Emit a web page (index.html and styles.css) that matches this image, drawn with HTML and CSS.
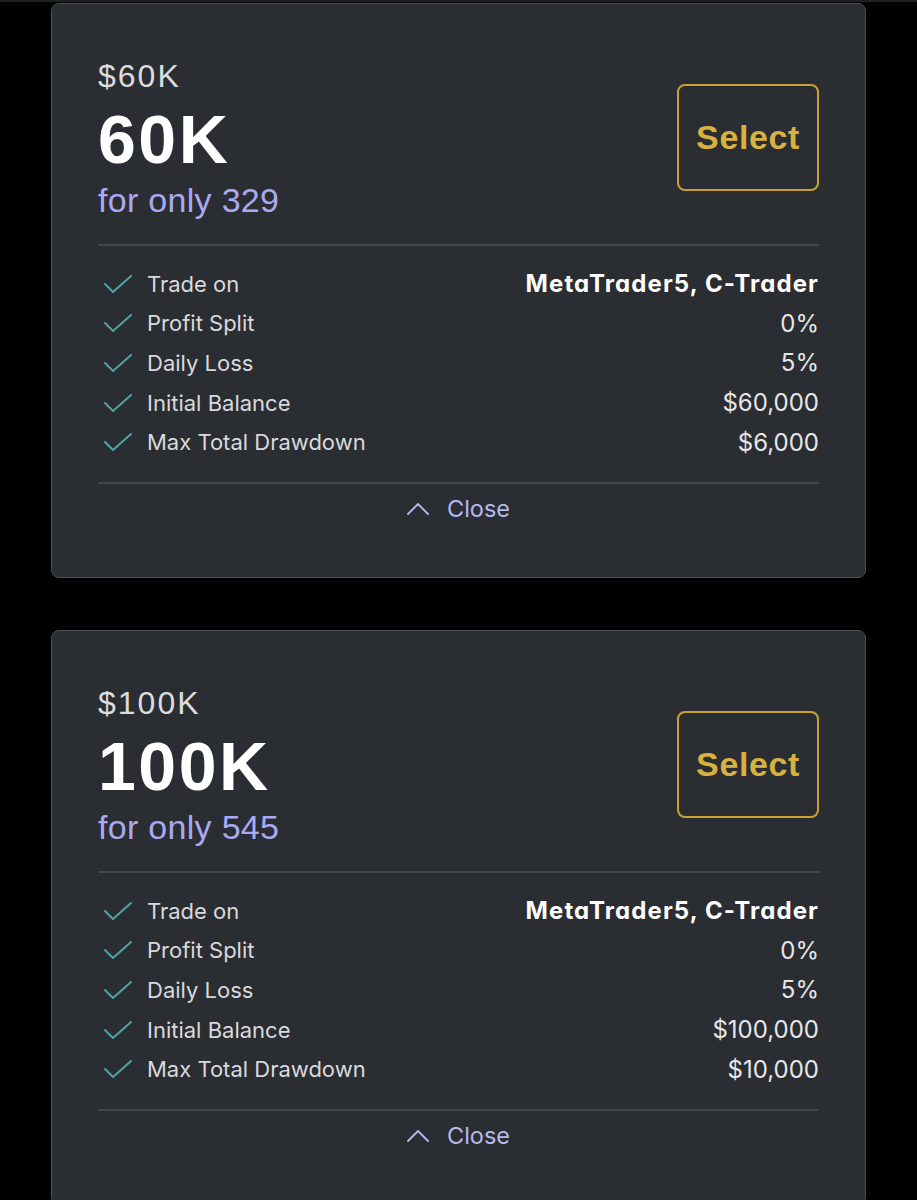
FILE: index.html
```html
<!DOCTYPE html>
<html lang="en">
<head>
<meta charset="utf-8">
<title>Plans</title>
<link rel="stylesheet" href="styles.css">
</head>
<body>
<div class="topbar"></div>
<main class="page">
  <section class="card">
    <div class="card-head">
      <div class="head-text">
        <div class="label">$60K</div>
        <div class="title">60K</div>
        <div class="subtitle">for only 329</div>
      </div>
      <button class="select">Select</button>
    </div>
    <hr class="divider">
    <ul class="features">
      <li class="row"><svg class="check" viewBox="0 0 28 18"><polyline points="1,9 9,17 27,1"/></svg><span class="name">Trade on</span><span class="value strong">MetaTrader5, C-Trader</span></li>
      <li class="row"><svg class="check" viewBox="0 0 28 18"><polyline points="1,9 9,17 27,1"/></svg><span class="name">Profit Split</span><span class="value">0%</span></li>
      <li class="row"><svg class="check" viewBox="0 0 28 18"><polyline points="1,9 9,17 27,1"/></svg><span class="name">Daily Loss</span><span class="value">5%</span></li>
      <li class="row"><svg class="check" viewBox="0 0 28 18"><polyline points="1,9 9,17 27,1"/></svg><span class="name">Initial Balance</span><span class="value">$60,000</span></li>
      <li class="row"><svg class="check" viewBox="0 0 28 18"><polyline points="1,9 9,17 27,1"/></svg><span class="name">Max Total Drawdown</span><span class="value">$6,000</span></li>
    </ul>
    <hr class="divider">
    <button class="close"><svg class="chev" viewBox="0 0 22 12"><polyline points="1,11 11,1 21,11"/></svg><span>Close</span></button>
  </section>

  <section class="card">
    <div class="card-head">
      <div class="head-text">
        <div class="label">$100K</div>
        <div class="title">100K</div>
        <div class="subtitle">for only 545</div>
      </div>
      <button class="select">Select</button>
    </div>
    <hr class="divider">
    <ul class="features">
      <li class="row"><svg class="check" viewBox="0 0 28 18"><polyline points="1,9 9,17 27,1"/></svg><span class="name">Trade on</span><span class="value strong">MetaTrader5, C-Trader</span></li>
      <li class="row"><svg class="check" viewBox="0 0 28 18"><polyline points="1,9 9,17 27,1"/></svg><span class="name">Profit Split</span><span class="value">0%</span></li>
      <li class="row"><svg class="check" viewBox="0 0 28 18"><polyline points="1,9 9,17 27,1"/></svg><span class="name">Daily Loss</span><span class="value">5%</span></li>
      <li class="row"><svg class="check" viewBox="0 0 28 18"><polyline points="1,9 9,17 27,1"/></svg><span class="name">Initial Balance</span><span class="value">$100,000</span></li>
      <li class="row"><svg class="check" viewBox="0 0 28 18"><polyline points="1,9 9,17 27,1"/></svg><span class="name">Max Total Drawdown</span><span class="value">$10,000</span></li>
    </ul>
    <hr class="divider">
    <button class="close"><svg class="chev" viewBox="0 0 22 12"><polyline points="1,11 11,1 21,11"/></svg><span>Close</span></button>
  </section>
</main>
</body>
</html>
```
FILE: styles.css
```css
html, body {
  margin: 0;
  padding: 0;
  background: #000;
}

body {
  font-family: Inter, "Liberation Sans", sans-serif;
  color: #e4e4e6;
}

.topbar {
  height: 2px;
  background: #1e1f22;
}

.page {
  display: flex;
  flex-direction: column;
  gap: 52px;
  padding: 1px 51px 0 51px;
}

.card {
  background: #2a2d32;
  border: 1px solid #4c4f55;
  border-radius: 8px;
  padding: 53px 46px 48px 46px;
}

.card-head {
  display: flex;
  justify-content: space-between;
  align-items: flex-start;
  margin-bottom: 27px;
}

.head-text {
  font-family: "Liberation Sans", Arial, sans-serif;
}

.label {
  font-size: 32px;
  line-height: 38px;
  color: #dcdcdf;
  letter-spacing: 2px;
}

.title {
  font-size: 68px;
  line-height: 88px;
  font-weight: 700;
  color: #ffffff;
  letter-spacing: 2.5px;
}

.subtitle {
  font-size: 34px;
  line-height: 34px;
  color: #a9a9f0;
  letter-spacing: 0.3px;
}

.select {
  margin-top: 27px;
  width: 142px;
  height: 107px;
  background: transparent;
  border: 2px solid #c9a130;
  border-radius: 8px;
  color: #d8b13e;
  font-family: "Liberation Sans", Arial, sans-serif;
  font-weight: 700;
  font-size: 34px;
  letter-spacing: 0.6px;
  padding: 0;
}

.divider {
  margin: 0;
  border: 0;
  height: 2px;
  background: #43464c;
}

.features {
  list-style: none;
  margin: 0;
  padding: 18px 0 20px 0;
}

.row {
  display: flex;
  align-items: center;
  height: 39.6px;
  font-size: 22px;
}

.check {
  width: 28px;
  height: 18px;
  margin-left: 6px;
  margin-right: 15px;
  flex: none;
}

.check polyline {
  fill: none;
  stroke: #4fa3a6;
  stroke-width: 2;
  stroke-linecap: round;
  stroke-linejoin: round;
}

.name {
  flex: 1;
  color: #d9d9dc;
}

.value {
  color: #e6e6e8;
  font-size: 24px;
}

.value.strong {
  font-weight: 700;
  color: #ffffff;
  letter-spacing: 1.1px;
  font-feature-settings: "cv11" 1;
}

.close {
  display: flex;
  align-items: center;
  justify-content: center;
  gap: 18px;
  width: 100%;
  height: 40px;
  margin-top: 5px;
  padding: 0;
  background: transparent;
  border: 0;
  color: #b6b8ee;
  font-family: Inter, "Liberation Sans", sans-serif;
  font-size: 23.5px;
}

.chev {
  width: 22px;
  height: 12px;
}

.chev polyline {
  fill: none;
  stroke: #b6b8ee;
  stroke-width: 1.8;
  stroke-linecap: round;
  stroke-linejoin: round;
}
```
